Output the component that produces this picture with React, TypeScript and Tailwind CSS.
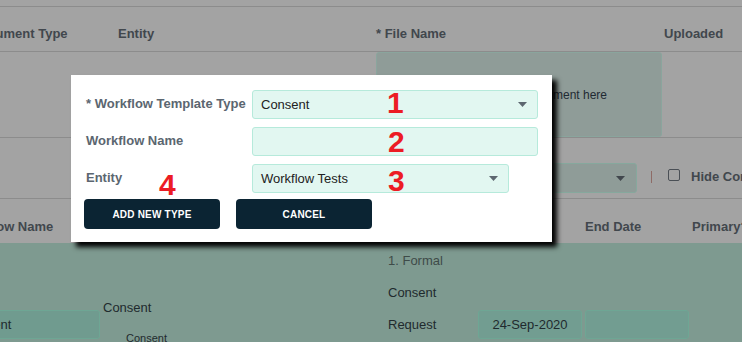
import React from "react";

// Dimmed page behind the "add workflow type" dialog
function Caret({ className = "" }: { className?: string }) {
  return (
    <svg width="9" height="5" viewBox="0 0 9 5" className={className}>
      <path d="M0 0h9L4.5 5z" fill="currentColor" />
    </svg>
  );
}

function Annotation({ n, className }: { n: string; className: string }) {
  return (
    <span
      className={`absolute text-[30px] leading-[30px] font-bold text-[#ec1c24] ${className}`}
    >
      {n}
    </span>
  );
}

function Backdrop() {
  return (
    <div className="flex h-full flex-col text-[13px]">
      <div className="h-[7px] shrink-0 border-b border-[#8c8c8c]" />

      {/* header */}
      <div className="flex h-[45px] shrink-0 items-center border-b border-[#8c8c8c] pt-[10px] font-bold text-[#41474d] whitespace-nowrap">
        <div className="-ml-[29px] w-[147px] shrink-0">Document Type</div>
        <div className="w-[258px] shrink-0">Entity</div>
        <div className="w-[288px] shrink-0">* File Name</div>
        <div className="shrink-0">Uploaded</div>
      </div>

      {/* upload row */}
      <div className="flex h-[86px] shrink-0 border-b border-[#8c8c8c]">
        <div className="ml-[376px] flex w-[286px] shrink-0 items-center justify-end rounded-[3px] border border-[#8aa59d] bg-[#8f9c98] pr-[54px] text-[12px] text-[#1f2a33] whitespace-nowrap">
          Drag and drop your document here
        </div>
      </div>

      {/* filter row */}
      <div className="flex h-[61px] shrink-0 items-start border-b border-[#8c8c8c] pt-[25px] whitespace-nowrap">
        <div className="ml-[400px] flex h-[30px] w-[237px] shrink-0 items-center justify-end rounded-[3px] border border-[#86a89d] bg-[#8f9c98] pr-[11px] text-[#41474d]">
          <Caret />
        </div>
        <div className="ml-[14px] mt-[8px] h-[12px] w-px shrink-0 bg-[#8e6b66]" />
        <div className="mt-[6px] ml-[16px] h-[12px] w-[12px] shrink-0 rounded-[2px] border border-[#4a4f55]" />
        <div className="mt-[4px] ml-[11px] shrink-0 font-bold text-[#41474d]">Hide Completed</div>
      </div>

      {/* second header */}
      <div className="flex h-[44px] shrink-0 items-center pt-[12px] font-bold text-[#41474d] whitespace-nowrap">
        <div className="-ml-[44px] w-[629px] shrink-0">Workflow Name</div>
        <div className="w-[107px] shrink-0">End Date</div>
        <div className="shrink-0">Primary?</div>
      </div>

      {/* data rows */}
      <div className="flex flex-1 items-start bg-[#7e9a90] text-[#1f2a2e] whitespace-nowrap">
        <div className="-ml-[46px] mt-[67px] flex h-[29px] w-[146px] shrink-0 items-center rounded-[3px] border border-[#6ea694] bg-[#709b8f] pl-[8px]">
          Consent
        </div>
        <div className="ml-[3px] w-[285px] shrink-0 pt-[57px]">
          <div className="leading-[16px]">Consent</div>
          <div className="ml-[23px] mt-[16px] text-[11px] leading-[12px]">Consent</div>
        </div>
        <div className="w-[90px] shrink-0 pt-[2px] leading-[32px]">
          <div className="text-[#3e4b49]">1. Formal</div>
          <div>Consent</div>
          <div>Request</div>
        </div>
        <div className="mt-[67px] flex h-[29px] w-[104px] shrink-0 items-center justify-center rounded-[3px] border border-[#6ea694] bg-[#729d91]">
          24-Sep-2020
        </div>
        <div className="mt-[67px] ml-[3px] h-[29px] w-[104px] shrink-0 rounded-[3px] border border-[#6ea694] bg-[#729d91]" />
      </div>
    </div>
  );
}

function Field({
  label,
  width,
  value,
  select,
}: {
  label: string;
  width: string;
  value?: string;
  select?: boolean;
}) {
  return (
    <div className="flex items-center">
      <div className="w-[168px] pl-[2px] pb-[2px] text-[13px] font-bold text-[#5b6670] whitespace-nowrap">
        {label}
      </div>
      <div
        className={`flex h-[29px] items-center justify-between rounded-[3px] border border-[#b6eadb] bg-[#e2f7f1] pl-[8px] pr-[10px] text-[13px] text-[#222] ${width}`}
      >
        <span>{value}</span>
        {select && <Caret className="text-[#5d6770]" />}
      </div>
    </div>
  );
}

export default function App() {
  return (
    <div className="relative h-[342px] w-[742px] overflow-hidden bg-[#a3a3a3] font-['Liberation_Sans',Arial,sans-serif]">
      <Backdrop />

      <div className="absolute left-[71px] top-[75px] h-[167px] w-[481px] bg-white pt-[15px] pl-[13px] shadow-[5px_5px_5px_rgba(0,0,0,1)]">
        <div className="flex flex-col gap-[8px]">
          <Field label="* Workflow Template Type" width="w-[286px]" value="Consent" select />
          <Field label="Workflow Name" width="w-[286px]" />
          <Field label="Entity" width="w-[257px]" value="Workflow Tests" select />
        </div>
        <div className="mt-[6px] flex gap-[16px]">
          <button className="h-[30px] w-[136px] rounded-[4px] bg-[#0b2433] text-[10px] font-bold tracking-[0.2px] text-white">
            ADD NEW TYPE
          </button>
          <button className="h-[30px] w-[136px] rounded-[4px] bg-[#0b2433] text-[10px] font-bold tracking-[0.2px] text-white">
            CANCEL
          </button>
        </div>

        <Annotation n="1" className="left-[316px] top-[13px]" />
        <Annotation n="2" className="left-[317px] top-[52px]" />
        <Annotation n="3" className="left-[317px] top-[91px]" />
        <Annotation n="4" className="left-[88px] top-[95px]" />
      </div>
    </div>
  );
}
